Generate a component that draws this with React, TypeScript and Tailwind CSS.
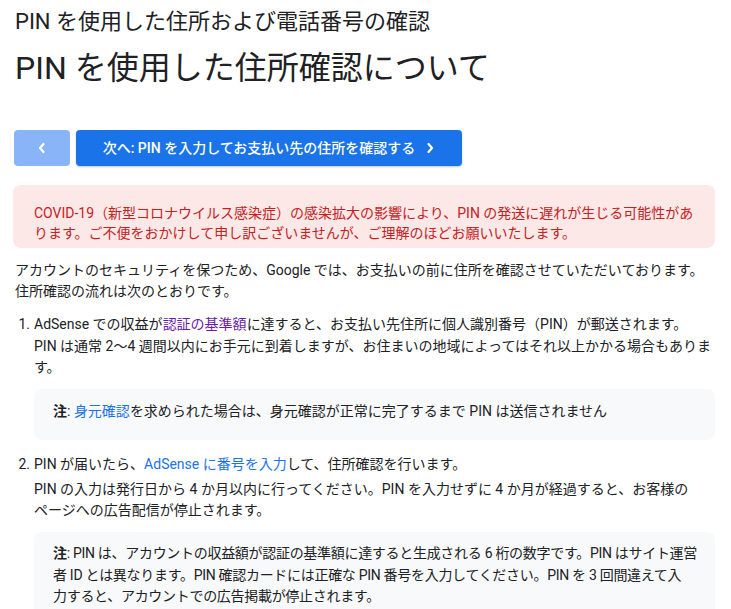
import React from "react";

const Chevron = ({ dir }: { dir: "left" | "right" }) => (
  <svg width="10" height="12" viewBox="0 0 10 12" fill="none" className="shrink-0">
    {dir === "left" ? (
      <path d="M6.5 2 L3 6 L6.5 10" stroke="white" strokeWidth="2.2" strokeLinecap="round" strokeLinejoin="round" />
    ) : (
      <path d="M3.5 2 L7 6 L3.5 10" stroke="white" strokeWidth="2.2" strokeLinecap="round" strokeLinejoin="round" />
    )}
  </svg>
);

export default function App() {
  return (
    <div
      lang="ja"
      className="bg-white text-[#202124] pl-[13px] pr-[16px] min-h-[609px] [line-break:strict]"
      style={{ fontFamily: 'Roboto, "Noto Sans CJK JP", sans-serif' }}
    >
      <h1 className="pt-[8px] pl-[2px] text-[22px] leading-[28px] font-normal">
        PIN を使用した住所および電話番号の確認
      </h1>
      <h2 className="mt-[12px] pl-[2px] text-[32px] leading-[40px] font-normal">
        PIN を使用した住所確認について
      </h2>

      <div className="mt-[42px] flex gap-[6px] pl-[1px]">
        <button className="w-[56px] h-[36px] rounded-[4px] bg-[#8ab4f8] flex items-center justify-center">
          <Chevron dir="left" />
        </button>
        <button className="w-[386px] h-[36px] rounded-[4px] bg-[#1a73e8] text-white text-[14px] font-medium flex items-center justify-center gap-[10px] shadow-[0_1px_2px_rgba(60,64,67,0.3)]">
          <span>次へ: PIN を入力してお支払い先の住所を確認する</span>
          <Chevron dir="right" />
        </button>
      </div>

      <div className="mt-[19px] rounded-[8px] bg-[#fce8e6] text-[#c5221f] text-[14px] leading-[20px] pl-[21px] pr-[16px] pt-[18px] pb-[5px]">
        COVID-19（新型コロナウイルス感染症）の感染拡大の影響により、PIN の発送に遅れが生じる可能性があります。ご不便をおかけして申し訳ございませんが、ご理解のほどお願いいたします。
      </div>

      <p className="mt-[12px] pl-[2px] text-[14px] leading-[21px]">
        アカウントのセキュリティを保つため、Google では、お支払いの前に住所を確認させていただいております。住所確認の流れは次のとおりです。
      </p>

      <ol className="mt-[12px] text-[14px] leading-[21px]">
        <li className="flex">
          <span className="w-[21px] shrink-0 text-right pr-[4px]">1.</span>
          <div className="flex-1">
            <div>
              AdSense での収益が<a className="text-[#681da8]">認証の基準額</a>に達すると、お支払い先住所に個人識別番号（PIN）が郵送されます。
            </div>
            <p className="mt-[1px]">
              PIN は通常 2～4 週間以内にお手元に到着しますが、お住まいの地域によってはそれ以上かかる場合もあります。
            </p>
            <div className="mt-[11px] rounded-[8px] bg-[#f8f9fa] pl-[19px] pr-[16px] pt-[12px] pb-[18px]">
              <b className="font-bold">注</b>: <a className="text-[#1a73e8]">身元確認</a>を求められた場合は、身元確認が正常に完了するまで PIN は送信されません
            </div>
          </div>
        </li>
        <li className="flex mt-[14px]">
          <span className="w-[21px] shrink-0 text-right pr-[4px]">2.</span>
          <div className="flex-1">
            <div>
              PIN が届いたら、<a className="text-[#1a73e8]">AdSense に番号を入力</a>して、住所確認を行います。
            </div>
            <p className="mt-[4px]">
              PIN の入力は発行日から 4 か月以内に行ってください。PIN を入力せずに 4 か月が経過すると、お客様のページへの広告配信が停止されます。
            </p>
            <div className="mt-[11px] rounded-[8px] bg-[#f8f9fa] pl-[19px] pr-[10px] pt-[11px] pb-[18px] leading-[21.5px] tracking-[-0.3px]">
              <b className="font-bold">注</b>: PIN は、アカウントの収益額が認証の基準額に達すると生成される 6 桁の数字です。PIN はサイト運営
              <br />
              者 ID とは異なります。PIN 確認カードには正確な PIN 番号を入力してください。PIN を 3 回間違えて入
              <br />
              力すると、アカウントでの広告掲載が停止されます。
            </div>
          </div>
        </li>
      </ol>
    </div>
  );
}
